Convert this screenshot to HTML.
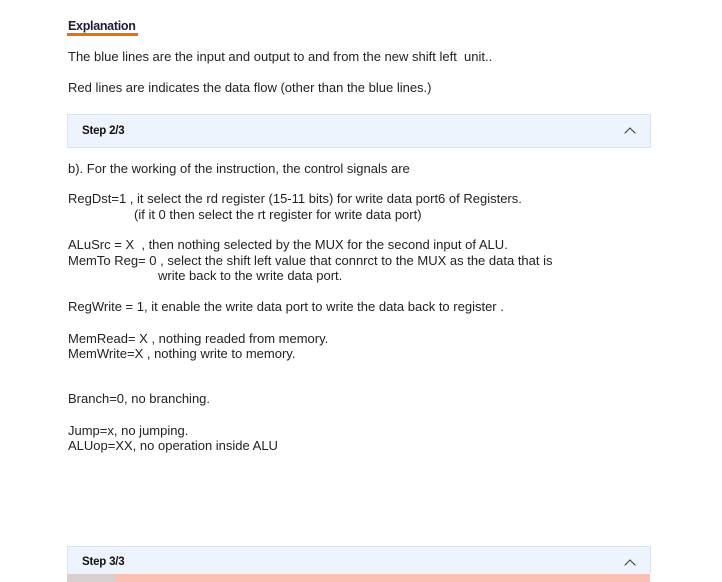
<!DOCTYPE html><html><head><style>
body{margin:0;width:722px;height:582px;background:#fff;position:relative;overflow:hidden;font-family:"Liberation Sans",sans-serif;color:#222;}
.l{position:absolute;left:68px;font-size:13px;letter-spacing:0px;white-space:pre;line-height:15px;}
.box{position:absolute;left:67px;width:582px;background:#eef4fd;border:1px solid #dde3ec;}
.box b{position:absolute;left:14px;font-size:11.5px;letter-spacing:-0.2px;color:#111;}
.chev{position:absolute;right:16px;width:7px;height:7px;border-left:1.3px solid #333;border-top:1.3px solid #333;transform:rotate(45deg);}
</style></head><body>
<div class="l" style="top:19px;font-weight:bold;font-size:12.5px;letter-spacing:-0.3px;color:#1d1d3a;">Explanation</div>
<div style="position:absolute;left:67px;top:33px;width:71px;height:3px;background:#e87100;"></div>
<div class="l" style="top:49px">The blue lines are the input and output to and from the new shift left  unit..</div>
<div class="l" style="top:80px">Red lines are indicates the data flow (other than the blue lines.)</div>
<div class="box" style="top:114px;height:32px;"><b style="top:10px">Step 2/3</b><div class="chev" style="top:14px"></div></div>
<div class="l" style="top:161px">b). For the working of the instruction, the control signals are</div>
<div class="l" style="top:191px">RegDst=1 , it select the rd register (15-11 bits) for write data port6 of Registers.</div>
<div class="l" style="top:207px;left:134px">(if it 0 then select the rt register for write data port)</div>
<div class="l" style="top:237px">ALuSrc = X  , then nothing selected by the MUX for the second input of ALU.</div>
<div class="l" style="top:253px">MemTo Reg= 0 , select the shift left value that connrct to the MUX as the data that is</div>
<div class="l" style="top:268px;left:158px">write back to the write data port.</div>
<div class="l" style="top:299px">RegWrite = 1, it enable the write data port to write the data back to register .</div>
<div class="l" style="top:331px">MemRead= X , nothing readed from memory.</div>
<div class="l" style="top:346px">MemWrite=X , nothing write to memory.</div>
<div class="l" style="top:391px">Branch=0, no branching.</div>
<div class="l" style="top:423px">Jump=x, no jumping.</div>
<div class="l" style="top:438px">ALUop=XX, no operation inside ALU</div>
<div class="box" style="top:546px;height:27px;border-bottom:none;"><b style="top:9px">Step 3/3</b><div class="chev" style="top:14px"></div></div>
<div style="position:absolute;left:67px;top:574px;width:49px;height:8px;background:#d8cfcf;"></div>
<div style="position:absolute;left:116px;top:574px;width:534px;height:8px;background:#fbc0b4;"></div>
</body></html>
